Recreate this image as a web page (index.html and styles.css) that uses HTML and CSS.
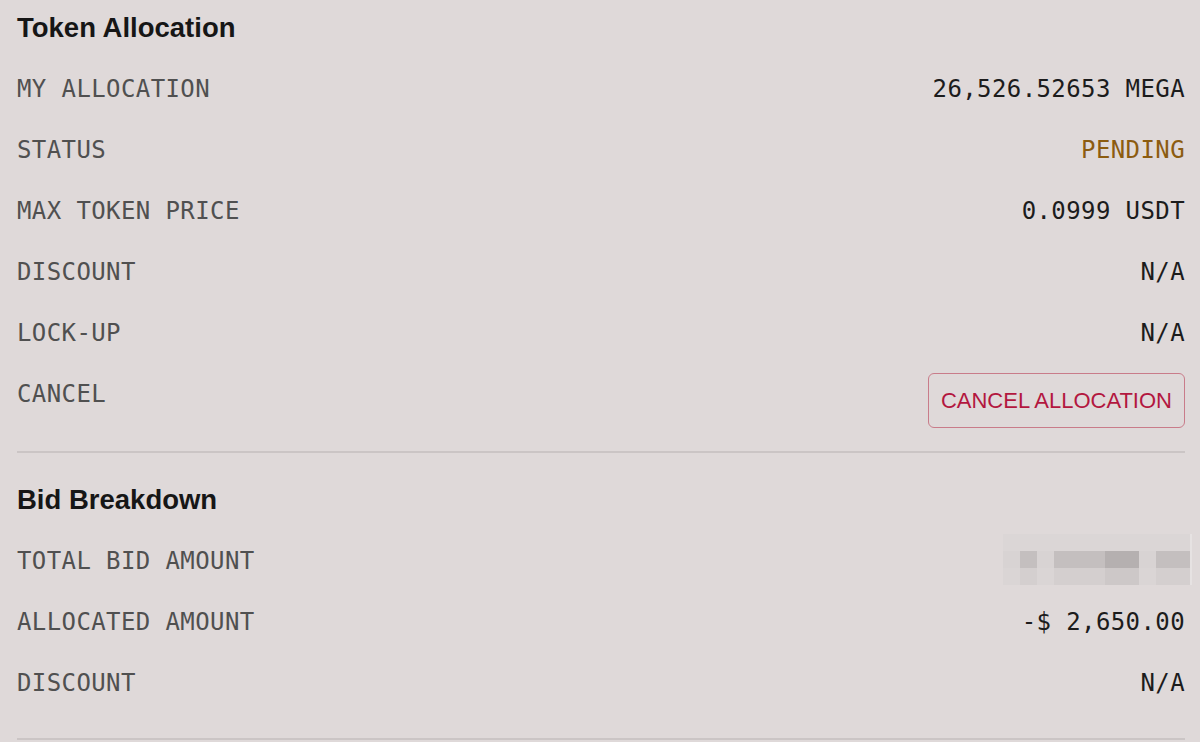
FILE: index.html
```html
<!DOCTYPE html>
<html lang="en">
<head>
  <meta charset="UTF-8" />
  <meta name="viewport" content="width=device-width, initial-scale=1.0"/>
  <title>Token Allocation</title>
  <link rel="stylesheet" href="styles.css">
</head>
<body>
  <div class="panel">
    <section class="block">
      <h2>Token Allocation</h2>
      <div class="row">
        <span class="label">MY ALLOCATION</span>
        <span class="value">26,526.52653 MEGA</span>
      </div>
      <div class="row">
        <span class="label">STATUS</span>
        <span class="value pending">PENDING</span>
      </div>
      <div class="row">
        <span class="label">MAX TOKEN PRICE</span>
        <span class="value">0.0999 USDT</span>
      </div>
      <div class="row">
        <span class="label">DISCOUNT</span>
        <span class="value">N/A</span>
      </div>
      <div class="row">
        <span class="label">LOCK-UP</span>
        <span class="value">N/A</span>
      </div>
      <div class="row">
        <span class="label">CANCEL</span>
        <button class="cancel-btn">CANCEL ALLOCATION</button>
      </div>
    </section>

    <section class="block">
      <h2>Bid Breakdown</h2>
      <div class="row">
        <span class="label">TOTAL BID AMOUNT</span>
        <div class="blur">
          <div class="blur-line light">
            <i></i><i></i><i></i><i></i><i></i><i></i><i></i><i></i><i></i><i></i><i></i>
          </div>
          <div class="blur-line mid">
            <i></i><i></i><i></i><i></i><i></i><i></i><i></i><i></i><i></i><i></i><i></i>
          </div>
          <div class="blur-line low">
            <i></i><i></i><i></i><i></i><i></i><i></i><i></i><i></i><i></i><i></i><i></i>
          </div>
        </div>
      </div>
      <div class="row">
        <span class="label">ALLOCATED AMOUNT</span>
        <span class="value">-$ 2,650.00</span>
      </div>
      <div class="row">
        <span class="label">DISCOUNT</span>
        <span class="value">N/A</span>
      </div>
    </section>
  </div>
</body>
</html>
```

FILE: styles.css
```css
* {
  margin: 0;
  padding: 0;
  box-sizing: border-box;
}

body {
  background-color: #dfd9d9;
  font-family: 'Liberation Sans', Arial, sans-serif;
  color: #1a1a1a;
}

.panel {
  padding: 0 15px 0 17px;
}

.block {
  padding-top: 10px;
  padding-bottom: 23px;
  border-bottom: 2px solid #cbc5c5;
}

.block + .block {
  padding-top: 29px;
  padding-bottom: 24px;
}

h2 {
  font-size: 27.5px;
  line-height: 36px;
  font-weight: bold;
  color: #161616;
  margin-bottom: 13px;
}

.row {
  display: flex;
  justify-content: space-between;
  align-items: flex-start;
  min-height: 61px;
}

.label, .value {
  font-family: 'DejaVu Sans Mono', 'Liberation Mono', monospace;
  font-size: 24px;
  letter-spacing: 0.4px;
  line-height: 61px;
}

.label {
  color: #505050;
}

.value {
  color: #1c1c1c;
}

.pending {
  color: #8c5c10;
}

.cancel-btn {
  margin-top: 9px;
  height: 55px;
  padding: 0 12px;
  background: transparent;
  border: 1px solid #c97c8a;
  border-radius: 6px;
  font-family: 'Liberation Sans', Arial, sans-serif;
  font-size: 22px;
  color: #b3173f;
  cursor: pointer;
}

/* pixelated hidden amount */
.blur {
  margin-top: 3px;
  margin-right: -7px;
  border-right: 2px solid #e6e2e2;
}

.blur-line {
  display: flex;
  height: 17px;
}

.blur-line i {
  display: block;
  width: 17px;
  height: 17px;
  background: #dbd6d6;
}

.blur-line.mid i:nth-child(2),
.blur-line.mid i:nth-child(4),
.blur-line.mid i:nth-child(5),
.blur-line.mid i:nth-child(6),
.blur-line.mid i:nth-child(10),
.blur-line.mid i:nth-child(11) {
  background: #c4bfbf;
}

.blur-line.mid i:nth-child(7),
.blur-line.mid i:nth-child(8) {
  background: #b5b0b0;
}

.blur-line.mid i:nth-child(1),
.blur-line.mid i:nth-child(3),
.blur-line.mid i:nth-child(9) {
  background: #d8d3d3;
}

.blur-line.low i {
  background: #d4cfcf;
}

.blur-line.low i:nth-child(1),
.blur-line.low i:nth-child(3),
.blur-line.low i:nth-child(9) {
  background: #dad5d5;
}

.blur-line.low i:nth-child(7),
.blur-line.low i:nth-child(8) {
  background: #cdc8c8;
}
```
